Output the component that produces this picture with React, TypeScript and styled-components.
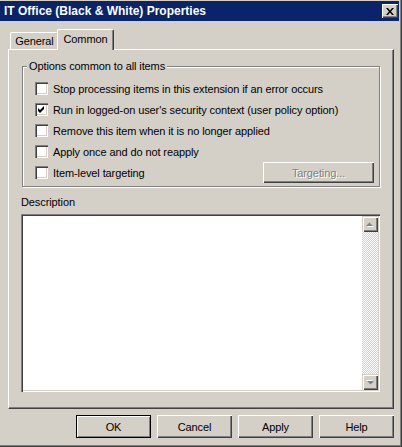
import React from "react";
import styled, { createGlobalStyle, css } from "styled-components";

const FACE = "#d4d0c8";
const SHADOW = "#808080";
const DARK = "#404040";
const HILITE = "#ffffff";

const GlobalStyle = createGlobalStyle`
  html, body { margin: 0; padding: 0; background: ${FACE}; }
  body {
    font-family: "Liberation Sans", Arial, sans-serif;
    font-size: 11px;
    color: #000;
  }
  * { box-sizing: border-box; }
`;

const raised = css`
  background: ${FACE};
  box-shadow: inset 1px 1px 0 ${HILITE}, inset -1px -1px 0 ${DARK},
    inset -2px -2px 0 ${SHADOW};
`;

const Window = styled.div`
  width: 402px;
  height: 447px;
  background: ${FACE};
  padding: 1px 3px 3px 0;
  display: flex;
  flex-direction: column;
  box-shadow: inset -1px -1px 0 ${DARK}, inset -2px -2px 0 ${SHADOW};
`;

const TitleBar = styled.div`
  flex: none;
  height: 20px;
  background: #0a246a;
  color: #fff;
  display: flex;
  align-items: center;
  justify-content: space-between;
  padding: 0 1px 0 4px;
  font: bold 12px "Liberation Sans", Arial, sans-serif;
`;

const CloseButton = styled.div`
  width: 16px;
  height: 14px;
  display: flex;
  align-items: center;
  justify-content: center;
  ${raised}
`;

const Body = styled.div`
  flex: 1;
  display: flex;
  flex-direction: column;
  padding: 8px 5px 6px 8px;
`;

const TabRow = styled.div`
  flex: none;
  height: 20px;
  display: flex;
  align-items: flex-end;
  padding-left: 2px;
  position: relative;
  z-index: 1;
`;

const Tab = styled.div<{ $active?: boolean; $w: number }>`
  width: ${(p) => p.$w}px;
  height: ${(p) => (p.$active ? 21 : 17)}px;
  margin: ${(p) => (p.$active ? "0 0 -1px -2px" : "0")};
  background: ${FACE};
  border-top: 1px solid ${HILITE};
  border-left: 1px solid ${HILITE};
  border-right: 1px solid ${DARK};
  border-top-left-radius: 2px;
  border-top-right-radius: 2px;
  box-shadow: inset -1px 0 0 ${SHADOW};
  display: flex;
  align-items: center;
  justify-content: center;
  padding-bottom: ${(p) => (p.$active ? 2 : 0)}px;
  letter-spacing: -0.1px;
`;

const Panel = styled.div`
  flex: 1;
  display: flex;
  flex-direction: column;
  border: 1px solid;
  border-color: ${HILITE} ${DARK} ${DARK} ${HILITE};
  box-shadow: inset -1px -1px 0 ${SHADOW};
  padding: 10px 13px 0 13px;
`;

const Group = styled.fieldset`
  margin: 0;
  padding: 5px 5px 3px 0;
  border: 1px solid ${SHADOW};
  box-shadow: inset 1px 1px 0 ${HILITE}, 1px 1px 0 ${HILITE};
  display: flex;
  flex-direction: column;
  min-width: 0;
`;

const Legend = styled.legend`
  margin-left: 4px;
  padding: 0 2px;
  line-height: 13px;
  background: ${FACE};
  letter-spacing: -0.1px;
`;

const Row = styled.div`
  height: 21px;
  display: flex;
  align-items: center;
  padding-left: 12px;
`;

const Check = styled.div`
  flex: none;
  width: 13px;
  height: 13px;
  margin-right: 5px;
  background: #fff;
  box-shadow: inset 1px 1px 0 ${SHADOW}, inset 2px 2px 0 ${DARK},
    inset -1px -1px 0 ${HILITE}, inset -2px -2px 0 ${FACE};
  display: flex;
  align-items: center;
  justify-content: center;
`;

const Label = styled.span`
  white-space: nowrap;
  letter-spacing: -0.1px;
`;

const PushButton = styled.div<{ $w: number; $h: number; $disabled?: boolean; $default?: boolean }>`
  flex: none;
  width: ${(p) => p.$w}px;
  height: ${(p) => p.$h}px;
  display: flex;
  align-items: center;
  justify-content: center;
  letter-spacing: -0.1px;
  ${raised}
  ${(p) =>
    p.$default &&
    css`
      border: 1px solid #000;
      box-shadow: inset 1px 1px 0 ${HILITE}, inset -1px -1px 0 ${SHADOW};
    `}
  ${(p) =>
    p.$disabled &&
    css`
      color: ${SHADOW};
      text-shadow: 1px 1px 0 ${HILITE};
    `}
`;

const TargetButton = styled(PushButton)`
  margin-left: auto;
`;

const DescLabel = styled.div`
  margin: 9px 0 0 -1px;
  line-height: 13px;
  letter-spacing: -0.1px;
`;

const TextBox = styled.div`
  height: 178px;
  margin: 5px 0 0 -1px;
  padding: 2px;
  background: #fff;
  box-shadow: inset 1px 1px 0 ${SHADOW}, inset 2px 2px 0 ${DARK},
    inset -1px -1px 0 ${HILITE}, inset -2px -2px 0 ${FACE};
  display: flex;
  justify-content: flex-end;
`;

const ScrollBar = styled.div`
  width: 16px;
  display: flex;
  flex-direction: column;
  justify-content: space-between;
  background: repeating-conic-gradient(${FACE} 0 25%, #fff 0 50%) 0 0 / 2px 2px;
`;

const ScrollButton = styled.div`
  width: 16px;
  height: 16px;
  display: flex;
  align-items: center;
  justify-content: center;
  background: ${FACE};
  box-shadow: inset 1px 1px 0 ${FACE}, inset 2px 2px 0 ${HILITE},
    inset -1px -1px 0 ${DARK}, inset -2px -2px 0 ${SHADOW};
`;

const ButtonRow = styled.div`
  flex: none;
  display: flex;
  justify-content: flex-end;
  gap: 6px;
  margin-top: 6px;
`;

const CheckMark = () => (
  <svg width="7" height="7" viewBox="0 0 7 7">
    <path d="M0 2 L2 4 L6 0 L6 3 L2 7 L0 5 Z" fill="#000" />
  </svg>
);

const CloseGlyph = () => (
  <svg width="8" height="7" viewBox="0 0 8 7">
    <path d="M0 0 H2 L4 2.5 L6 0 H8 L5 3.5 L8 7 H6 L4 4.5 L2 7 H0 L3 3.5 Z" fill="#000" />
  </svg>
);

const Arrow = ({ down }: { down?: boolean }) => (
  <svg width="8" height="5" viewBox="0 0 8 5" style={down ? { transform: "rotate(180deg)" } : undefined}>
    <polygon points="1,5 4.5,1.5 8,5" fill="#fff" />
    <polygon points="0,4 3.5,0.5 7,4" fill={SHADOW} />
  </svg>
);

const options = [
  { text: "Stop processing items in this extension if an error occurs", checked: false },
  { text: "Run in logged-on user's security context (user policy option)", checked: true },
  { text: "Remove this item when it is no longer applied", checked: false },
  { text: "Apply once and do not reapply", checked: false },
  { text: "Item-level targeting", checked: false, targeting: true },
];

export default function App() {
  return (
    <>
      <GlobalStyle />
      <Window>
        <TitleBar>
          <span>IT Office (Black &amp; White) Properties</span>
          <CloseButton>
            <CloseGlyph />
          </CloseButton>
        </TitleBar>
        <Body>
          <TabRow>
            <Tab $w={49}>General</Tab>
            <Tab $w={57} $active>
              Common
            </Tab>
          </TabRow>
          <Panel>
            <Group>
              <Legend>Options common to all items</Legend>
              {options.map((o) => (
                <Row key={o.text}>
                  <Check>{o.checked && <CheckMark />}</Check>
                  <Label>{o.text}</Label>
                  {o.targeting && (
                    <TargetButton $w={111} $h={21} $disabled>
                      Targeting...
                    </TargetButton>
                  )}
                </Row>
              ))}
            </Group>
            <DescLabel>Description</DescLabel>
            <TextBox>
              <ScrollBar>
                <ScrollButton>
                  <Arrow />
                </ScrollButton>
                <ScrollButton>
                  <Arrow down />
                </ScrollButton>
              </ScrollBar>
            </TextBox>
          </Panel>
          <ButtonRow>
            <PushButton $w={75} $h={23} $default>
              OK
            </PushButton>
            <PushButton $w={75} $h={23}>
              Cancel
            </PushButton>
            <PushButton $w={75} $h={23}>
              Apply
            </PushButton>
            <PushButton $w={75} $h={23}>
              Help
            </PushButton>
          </ButtonRow>
        </Body>
      </Window>
    </>
  );
}
